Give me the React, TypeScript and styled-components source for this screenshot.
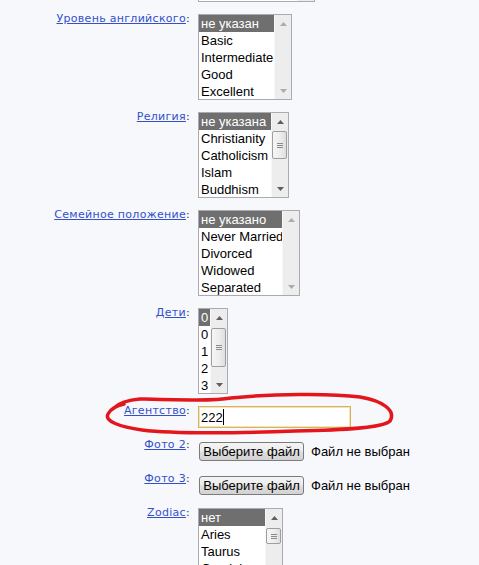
import React from "react";
import styled, { createGlobalStyle, css } from "styled-components";

const Global = createGlobalStyle`
  html, body { margin: 0; padding: 0; background: #f7f8fc; }
  body { font-family: "Liberation Sans", Arial, sans-serif; overflow: hidden; }
`;

const Page = styled.div`
  position: relative;
  width: 479px;
  height: 565px;
  overflow: hidden;
  background: #f7f8fc;
`;

const Form = styled.div`
  display: grid;
  grid-template-columns: 190px auto;
  justify-content: start;
  column-gap: 8px;
  row-gap: 12px;
  margin-top: -84px;
`;

const Label = styled.div`
  text-align: right;
  font-family: "DejaVu Sans", Verdana, sans-serif;
  font-size: 11px;
  letter-spacing: 0.3px;
  line-height: 14px;
  margin-top: -2px;
  color: #333;
  white-space: nowrap;
`;

const LabelLink = styled.a`
  color: #3350cc;
  text-decoration: underline;
  cursor: pointer;
`;

const Field = styled.div<{ $pt?: number; $pb?: number }>`
  display: flex;
  align-items: center;
  gap: 7px;
  padding-top: ${(p) => p.$pt ?? 0}px;
  padding-bottom: ${(p) => p.$pb ?? 0}px;
`;

const Box = styled.div<{ $w: number }>`
  width: ${(p) => p.$w}px;
  height: 86px;
  box-sizing: border-box;
  border: 1px solid #a9abb0;
  background: #fff;
  display: flex;
  overflow: hidden;
`;

const Options = styled.div`
  flex: 1;
  min-width: 0;
  overflow: hidden;
`;

const Option = styled.div<{ $sel?: boolean }>`
  height: 17px;
  line-height: 17px;
  font-size: 13px;
  padding-left: 2px;
  white-space: nowrap;
  color: #000;
  ${(p) =>
    p.$sel &&
    css`
      background: #6f6f6f;
      color: #fff;
    `}
`;

const Track = styled.div`
  width: 17px;
  flex: none;
  box-sizing: border-box;
  background: #ededed;
  border-left: 1px solid #f7f7f7;
  display: flex;
  flex-direction: column;
`;

const ArrowCell = styled.div`
  height: 17px;
  flex: none;
  display: flex;
  align-items: center;
  justify-content: center;
`;

const Middle = styled.div`
  flex: 1;
  display: flex;
  flex-direction: column;
`;

const Thumb = styled.div<{ $top: number; $h: number }>`
  margin: ${(p) => p.$top}px 0 0 0;
  width: 15px;
  height: ${(p) => p.$h}px;
  box-sizing: border-box;
  border: 1px solid #9e9e9e;
  border-radius: 2px;
  background: linear-gradient(90deg, #f6f6f6 0%, #ececec 60%, #dedede 100%);
  display: flex;
  flex-direction: column;
  align-items: center;
  justify-content: center;
  gap: 1px;
`;

const Grip = styled.div`
  width: 6px;
  height: 1px;
  background: #8a8a8a;
`;

const Arrow = ({ up, on }: { up?: boolean; on?: boolean }) => (
  <svg width="7" height="4" viewBox="0 0 7 4">
    <polygon
      points={up ? "3.5,0 7,4 0,4" : "0,0 7,0 3.5,4"}
      fill={on ? "#5f5f5f" : "#ababab"}
    />
  </svg>
);

type ListProps = {
  width: number;
  items: string[];
  thumb?: { top: number; h: number };
};

const ListBox = ({ width, items, thumb }: ListProps) => (
  <Box $w={width}>
    <Options>
      {items.map((t, i) => (
        <Option key={i} $sel={i === 0}>
          {t}
        </Option>
      ))}
    </Options>
    <Track>
      <ArrowCell>
        <Arrow up on={!!thumb} />
      </ArrowCell>
      <Middle>
        {thumb && (
          <Thumb $top={thumb.top} $h={thumb.h}>
            <Grip />
            <Grip />
            <Grip />
          </Thumb>
        )}
      </Middle>
      <ArrowCell>
        <Arrow on={!!thumb} />
      </ArrowCell>
    </Track>
  </Box>
);

const TextBox = styled.div`
  width: 153px;
  height: 22px;
  box-sizing: border-box;
  border: 1px solid #d8b25c;
  box-shadow: inset 0 0 0 1px #f4e3b6;
  background: #fff;
  display: flex;
  align-items: center;
  padding-left: 2px;
  font-size: 13px;
  color: #000;
`;

const Caret = styled.span`
  display: inline-block;
  width: 1px;
  height: 16px;
  background: #000;
`;

const FileButton = styled.button`
  height: 19px;
  width: 105px;
  box-sizing: border-box;
  padding: 0;
  margin: 0 0 0 1px;
  border: 1px solid #7b7b7b;
  border-radius: 3px;
  background: linear-gradient(#f4f4f4 0%, #ececec 48%, #dedede 52%, #d2d2d2 100%);
  font: 13px "Liberation Sans", Arial, sans-serif;
  line-height: 17px;
  color: #000;
`;

const FileStatus = styled.span`
  font-size: 13px;
  color: #000;
`;

const Annotation = styled.svg`
  position: absolute;
  left: 0;
  top: 0;
  pointer-events: none;
`;

export default function App() {
  return (
    <Page>
      <Global />
      <Form>
        <Label />
        <Field>
          <ListBox width={117} items={[]} thumb={{ top: 20, h: 30 }} />
        </Field>

        <Label>
          <LabelLink>Уровень английского</LabelLink>:
        </Label>
        <Field>
          <ListBox
            width={94}
            items={["не указан", "Basic", "Intermediate", "Good", "Excellent"]}
          />
        </Field>

        <Label>
          <LabelLink>Религия</LabelLink>:
        </Label>
        <Field>
          <ListBox
            width={91}
            items={["не указана", "Christianity", "Catholicism", "Islam", "Buddhism"]}
            thumb={{ top: 1, h: 28 }}
          />
        </Field>

        <Label>
          <LabelLink>Семейное положение</LabelLink>:
        </Label>
        <Field>
          <ListBox
            width={102}
            items={["не указано", "Never Married", "Divorced", "Widowed", "Separated"]}
          />
        </Field>

        <Label>
          <LabelLink>Дети</LabelLink>:
        </Label>
        <Field>
          <ListBox width={30} items={["0", "0", "1", "2", "3"]} thumb={{ top: 2, h: 39 }} />
        </Field>

        <Label>
          <LabelLink>Агентство</LabelLink>:
        </Label>
        <Field>
          <TextBox>
            222
            <Caret />
          </TextBox>
        </Field>

        <Label>
          <LabelLink>Фото 2</LabelLink>:
        </Label>
        <Field $pt={2} $pb={1}>
          <FileButton>Выберите файл</FileButton>
          <FileStatus>Файл не выбран</FileStatus>
        </Field>

        <Label>
          <LabelLink>Фото 3</LabelLink>:
        </Label>
        <Field $pt={2} $pb={1}>
          <FileButton>Выберите файл</FileButton>
          <FileStatus>Файл не выбран</FileStatus>
        </Field>

        <Label>
          <LabelLink>Zodiac</LabelLink>:
        </Label>
        <Field>
          <ListBox
            width={85}
            items={["нет", "Aries", "Taurus", "Gemini", "Cancer"]}
            thumb={{ top: 2, h: 16 }}
          />
        </Field>
      </Form>

      <Annotation width="479" height="565" viewBox="0 0 479 565">
        <path
          d="M 114 408 C 120 402, 128 400, 140 399 C 180 400, 215 401, 231 398 C 270 394, 330 393, 360 397 C 384 401, 396 411, 390 421 C 383 428, 345 430, 295 431 C 240 433, 175 434, 142 430 C 120 427, 104 421, 108 414 C 110 410, 115 406, 124 404"
          fill="none"
          stroke="#e3161d"
          strokeWidth="3.5"
          strokeLinecap="round"
          strokeLinejoin="round"
        />
      </Annotation>
    </Page>
  );
}
